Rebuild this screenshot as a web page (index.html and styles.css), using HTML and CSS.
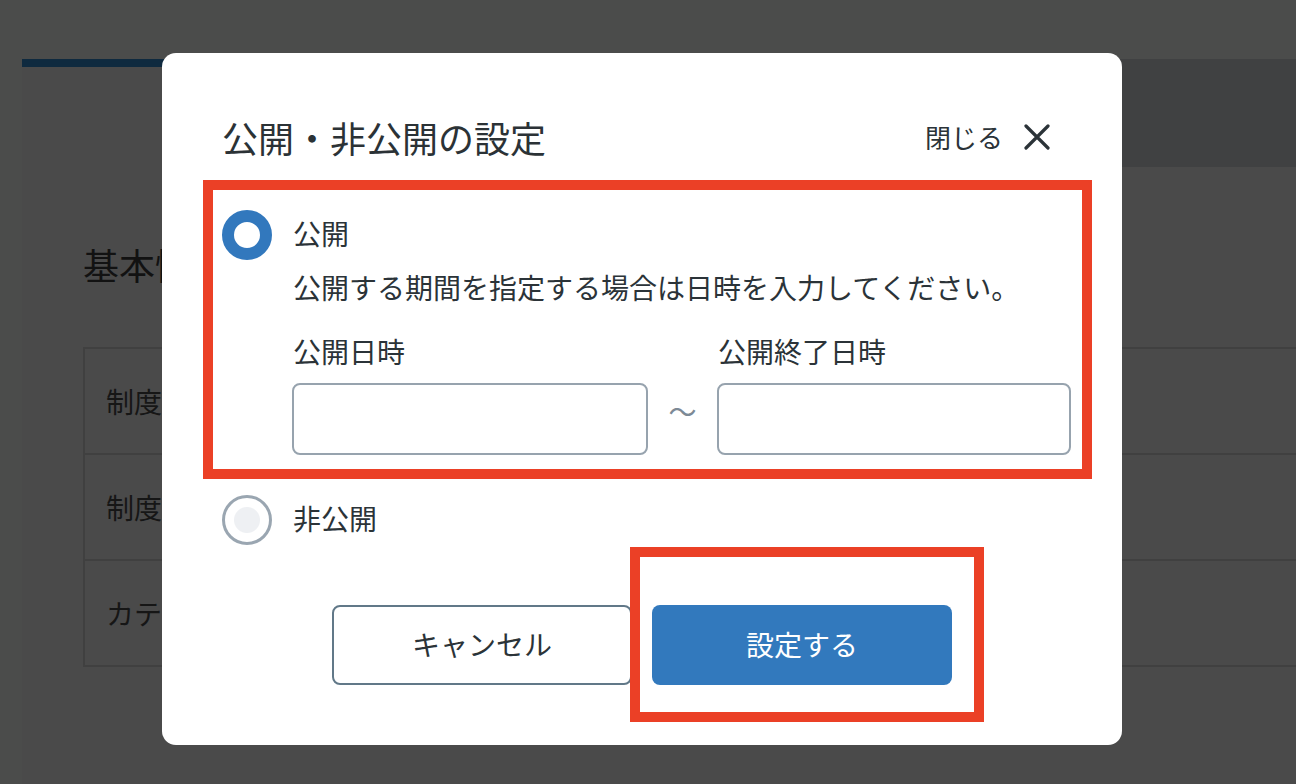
FILE: index.html
```html
<!DOCTYPE html>
<html lang="ja">
<head>
<meta charset="utf-8">
<title>公開・非公開の設定</title>
<link rel="stylesheet" href="styles.css">
</head>
<body>
<div class="page">
  <div class="card">
    <div class="tabs">
      <div class="tab tab-active"></div>
      <div class="tab tab-rest"></div>
    </div>
    <div class="card-body">
      <h2 class="section-title">基本情報</h2>
      <table class="info-table">
        <tr><th>制度名称</th><td></td></tr>
        <tr><th>制度概要</th><td></td></tr>
        <tr><th>カテゴリー</th><td></td></tr>
      </table>
    </div>
  </div>
</div>

<div class="modal" role="dialog" aria-label="公開・非公開の設定">
  <div class="modal-header">
    <h1 class="modal-title">公開・非公開の設定</h1>
    <button class="close-btn" type="button">
      <span>閉じる</span>
      <svg class="close-icon" width="26" height="26" viewBox="0 0 26 26" aria-hidden="true">
        <path d="M2 2 L24 24 M24 2 L2 24" stroke="#2b3338" stroke-width="3.2" stroke-linecap="round" fill="none"/>
      </svg>
    </button>
  </div>

  <div class="option option-public">
    <span class="radio radio-on"></span>
    <span class="option-label">公開</span>
    <div class="option-body">
      <p class="option-desc">公開する期間を指定する場合は日時を入力してください。</p>
      <div class="fields">
        <div class="field field-start">
          <label class="field-label">公開日時</label>
          <div class="input"></div>
        </div>
        <div class="tilde">〜</div>
        <div class="field field-end">
          <label class="field-label">公開終了日時</label>
          <div class="input"></div>
        </div>
      </div>
    </div>
  </div>

  <div class="option option-private">
    <span class="radio radio-off"></span>
    <span class="option-label">非公開</span>
  </div>

  <div class="actions">
    <button class="btn btn-cancel" type="button">キャンセル</button>
    <button class="btn btn-primary" type="button">設定する</button>
  </div>

  <div class="mark mark-option"></div>
  <div class="mark mark-submit"></div>
</div>
</body>
</html>
```
FILE: styles.css
```css
html, body {
  margin: 0;
  padding: 0;
}
body {
  width: 1296px;
  height: 784px;
  overflow: hidden;
  background: #4b4c4b;
  font-family: "Noto Sans CJK JP", "Noto Sans", sans-serif;
  color: #2b3338;
}

/* dimmed background page */
.page {
  padding: 59px 0 0 22px;
}
.card {
  background: #4a4a4a;
  height: 725px;
  overflow: hidden;
}
.tabs {
  display: flex;
  height: 108px;
}
.tab-active {
  width: 560px;
  background: #4a4a4a;
  border-top: 8px solid #0f2a3f;
}
.tab-rest {
  flex: 1;
  background: #404142;
}
.card-body {
  padding-left: 61px;
}
.section-title {
  margin: 0;
  padding-top: 70px;
  font-size: 36px;
  line-height: 54px;
  font-weight: 400;
  color: #121212;
}
.info-table {
  margin-top: 56px;
  width: 100%;
  border-collapse: collapse;
}
.info-table th,
.info-table td {
  height: 104px;
  border: 2px solid #404040;
  padding: 0;
}
.info-table td {
  border-right: 0;
}
.info-table th {
  width: 260px;
  padding-left: 21px;
  text-align: left;
  font-size: 28px;
  font-weight: 400;
  color: #161616;
}

/* modal */
.modal {
  position: fixed;
  left: 162px;
  top: 53px;
  width: 960px;
  box-sizing: border-box;
  padding: 57px 72px 60px 60px;
  background: #ffffff;
  border-radius: 14px;
}
.modal-header {
  display: flex;
  align-items: center;
  justify-content: space-between;
}
.modal-title {
  margin: 0;
  font-size: 36px;
  line-height: 54px;
  font-weight: 400;
  color: #2b3236;
}
.close-btn {
  display: flex;
  align-items: center;
  gap: 21px;
  padding: 0;
  border: 0;
  background: none;
  font-family: inherit;
  font-size: 26px;
  color: #2b3338;
}
.close-btn span {
  padding-bottom: 1px;
}
.close-icon {
  display: block;
}

.option {
  display: grid;
  grid-template-columns: 50px 1fr;
  column-gap: 21px;
  align-items: center;
}
.option-public {
  margin-top: 46px;
}
.option-private {
  margin-top: 40px;
}
.radio {
  width: 50px;
  height: 50px;
  box-sizing: border-box;
  border-radius: 50%;
}
.radio-on {
  border: 12px solid #3278bd;
  background: #ffffff;
}
.radio-off {
  border: 3px solid #9aa6b1;
  background: radial-gradient(circle, #eef0f3 0 12.5px, #ffffff 13.5px);
}
.option-label {
  font-size: 28px;
  line-height: 46px;
  padding-bottom: 4px;
}
.option-body {
  grid-column: 2;
}
.option-desc {
  margin: 7px 0 0;
  font-size: 28px;
  line-height: 40px;
}
.fields {
  display: flex;
  margin-top: 24px;
  margin-left: -1px;
}
.field-start {
  width: 356px;
}
.field-end {
  width: 354px;
}
.field-label {
  display: block;
  margin-left: 1px;
  margin-bottom: 12px;
  font-size: 28px;
  line-height: 40px;
}
.input {
  height: 72px;
  box-sizing: border-box;
  border: 2px solid #97a3ae;
  border-radius: 8px;
  background: #ffffff;
}
.tilde {
  width: 69px;
  align-self: flex-end;
  height: 72px;
  box-sizing: border-box;
  padding-bottom: 16px;
  display: flex;
  align-items: center;
  justify-content: center;
  font-size: 28px;
  color: #7d8a96;
}

.actions {
  display: flex;
  justify-content: center;
  gap: 20px;
  margin-top: 60px;
  margin-right: -12px;
}
.btn {
  width: 300px;
  height: 80px;
  box-sizing: border-box;
  border-radius: 8px;
  font-family: inherit;
  font-size: 28px;
  padding: 0 0 3px;
  cursor: pointer;
}
.btn-cancel {
  border: 2px solid #617888;
  background: #ffffff;
  color: #2b3338;
}
.btn-primary {
  border: 0;
  background: #3279bd;
  color: #ffffff;
}

/* red annotation frames */
.mark {
  position: absolute;
  box-sizing: border-box;
  border: 10px solid #eb4026;
  pointer-events: none;
}
.mark-option {
  left: 41px;
  top: 127px;
  width: 889px;
  height: 299px;
}
.mark-submit {
  left: 468px;
  top: 494px;
  width: 354px;
  height: 175px;
}
```
